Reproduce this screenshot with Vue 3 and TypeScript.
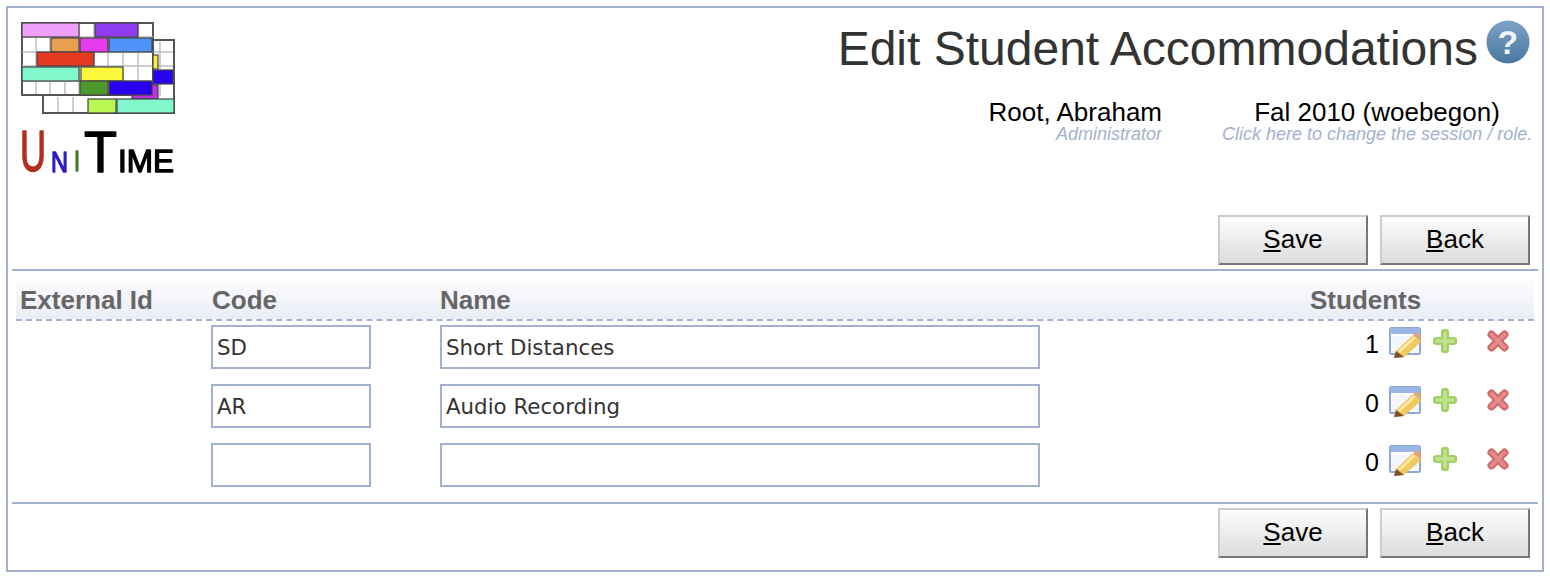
<script setup lang="ts">
interface Row { code: string; name: string; students: number }
const rows: Row[] = [
  { code: 'SD', name: 'Short Distances', students: 1 },
  { code: 'AR', name: 'Audio Recording', students: 0 },
  { code: '', name: '', students: 0 },
]
interface Bar { x: number; y: number; w: number; c: string }
const bars: Bar[] = [
  { x: 22, y: 23, w: 57, c: '#eea0f8' }, { x: 95, y: 23, w: 43, c: '#8f3cf0' },
  { x: 51, y: 38, w: 28, c: '#e8a050' }, { x: 80, y: 38, w: 28, c: '#e63cee' }, { x: 109, y: 38, w: 43, c: '#4f94f8' },
  { x: 37, y: 52, w: 57, c: '#e43a20' }, { x: 153, y: 55, w: 5, c: '#f8f040' },
  { x: 22, y: 67, w: 57, c: '#80f8cc' }, { x: 81, y: 67, w: 42, c: '#fcf83c' }, { x: 153, y: 70, w: 20, c: '#2a00f0' },
  { x: 132, y: 85, w: 26, c: '#c030e0' },
  { x: 80, y: 81, w: 28, c: '#4c982c' }, { x: 109, y: 81, w: 43, c: '#2a00f0' },
  { x: 88, y: 99, w: 28, c: '#b8f850' }, { x: 117, y: 99, w: 57, c: '#80f8cc' },
]
const vLines: number[] = [36, 50, 65, 79, 94, 108, 123, 138]
</script>

<template>
  <div class="frame">
    <header class="top">
      <svg class="logo" viewBox="18 18 162 172" width="162" height="172" role="img" aria-label="UniTime">
        <rect x="43" y="40" width="131" height="73" fill="#fff" stroke="#555" stroke-width="2" />
        <g stroke="#bbb" stroke-width="1.4">
          <line x1="58" y1="97" x2="58" y2="112" /><line x1="73" y1="97" x2="73" y2="112" />
          <line x1="160" y1="42" x2="160" y2="96" /><line x1="154" y1="66" x2="173" y2="66" />
          <line x1="154" y1="52" x2="173" y2="52" />
        </g>
        <rect x="22" y="23" width="131" height="72" fill="#fff" stroke="#555" stroke-width="2" />
        <g stroke="#bbb" stroke-width="1.4">
          <line v-for="x in vLines" :key="x" :x1="x" y1="24" :x2="x" y2="94" />
          <line x1="22" y1="37" x2="153" y2="37" /><line x1="22" y1="52" x2="153" y2="52" />
          <line x1="22" y1="66" x2="153" y2="66" /><line x1="22" y1="81" x2="153" y2="81" />
        </g>
        <rect v-for="b in bars" :key="b.x + '-' + b.y" :x="b.x" :y="b.y" :width="b.w" height="14" :fill="b.c" stroke="#444" stroke-width="1.2" />
        <text class="lt" x="20" y="171" font-size="58" fill="#b03020" stroke="#b03020" textLength="26" lengthAdjust="spacingAndGlyphs">U</text>
        <text class="lt" x="51" y="172" font-size="30" fill="#2a18c8" stroke="#2a18c8" textLength="17" lengthAdjust="spacingAndGlyphs">N</text>
        <text class="lt" x="74" y="171" font-size="30" fill="#3d7a30" stroke="#3d7a30" textLength="6" lengthAdjust="spacingAndGlyphs">I</text>
        <text class="lt" x="84" y="172" font-size="58" fill="#000" stroke="#000" textLength="33" lengthAdjust="spacingAndGlyphs">T</text>
        <text class="lt" x="118" y="172" font-size="32" fill="#000" stroke="#000" textLength="56" lengthAdjust="spacingAndGlyphs">IME</text>
      </svg>
      <div class="head-right">
        <div class="title-row">
          <h1>Edit Student Accommodations</h1>
          <svg class="help" viewBox="0 0 44 44" width="44" height="44" role="img" aria-label="Help">
            <defs>
              <linearGradient id="hg" x1="0" y1="0" x2="0" y2="1">
                <stop offset="0" stop-color="#7ea3c8" />
                <stop offset="1" stop-color="#4a769f" />
              </linearGradient>
            </defs>
            <circle cx="22" cy="22" r="21.5" fill="url(#hg)" />
            <text x="22" y="34" text-anchor="middle" class="q">?</text>
          </svg>
        </div>
        <div class="info">
          <div class="user">
            <div class="big">Root, Abraham</div>
            <div class="small clip">Administrator</div>
          </div>
          <div class="session">
            <div class="big">Fal 2010 (woebegon)</div>
            <div class="small">Click here to change the session / role.</div>
          </div>
        </div>
      </div>
    </header>

    <div class="buttons">
      <button type="button"><u>S</u>ave</button>
      <button type="button"><u>B</u>ack</button>
    </div>
    <div class="rule"></div>

    <div class="grid head">
      <div>External Id</div>
      <div>Code</div>
      <div>Name</div>
      <div>Students</div>
    </div>

    <div v-for="(r, i) in rows" :key="i" class="grid row">
      <div></div>
      <div class="cell-input"><input class="code" type="text" :value="r.code" /></div>
      <div class="cell-input"><input class="name" type="text" :value="r.name" /></div>
      <div class="actions">
        <span class="count">{{ r.students }}</span>
        <svg class="ic edit" viewBox="0 0 32 32" width="32" height="32">
          <rect x="1" y="1" width="30" height="26" rx="1.5" fill="#fdfdff" stroke="#8aa8dc" stroke-width="2" />
          <rect x="1" y="1" width="30" height="6" fill="#9bb6e4" />
          <path d="M3 9 H29 V25 H3 Z" fill="#f4f6fb" />
          <path d="M7 24 L24 8 L32 15 L15 30 L5 31 Z" fill="#f1c95e" />
          <path d="M10 25 L26 10" stroke="#fbeaa4" stroke-width="3" />
          <path d="M24 8 L27 6 Q30 6 32 9 L32 15 Z" fill="#e2a678" />
          <path d="M7 24 L15 30 L5 31 Z" fill="#7d5028" />
        </svg>
        <svg class="ic plus" viewBox="0 0 24 24" width="24" height="24">
          <path d="M12 3.5 V20.5 M3.5 12 H20.5" stroke="#a3cf68" stroke-width="8" stroke-linecap="round" />
          <path d="M12 4 V20 M4 12 H20" stroke="#bfe48c" stroke-width="3.5" stroke-linecap="round" />
        </svg>
        <svg class="ic del" viewBox="0 0 22 22" width="22" height="22">
          <path d="M4.5 4.5 L17.5 17.5 M17.5 4.5 L4.5 17.5" stroke="#d06c6c" stroke-width="8" stroke-linecap="round" />
          <path d="M4.5 4.5 L17.5 17.5 M17.5 4.5 L4.5 17.5" stroke="#e68a8a" stroke-width="3.5" stroke-linecap="round" />
        </svg>
      </div>
    </div>

    <div class="rule bottom"></div>
    <div class="buttons">
      <button type="button"><u>S</u>ave</button>
      <button type="button"><u>B</u>ack</button>
    </div>
  </div>
</template>

<style>
html, body { margin: 0; background: #fff; }
</style>

<style scoped>
.frame {
  box-sizing: border-box;
  width: 1538px;
  height: 566px;
  margin: 6px 0 0 6px;
  border: 2px solid #a4b0cf;
  padding: 0 4px;
  font-family: "Liberation Sans", Arial, sans-serif;
  color: #000;
}
.top {
  display: flex;
  height: 207px;
}
.logo {
  flex: none;
  margin: 10px 0 0 6px;
  filter: blur(0.6px);
}
.lt {
  font-family: "Liberation Sans", Arial, sans-serif;
  stroke-width: 1.4px;
  stroke-linejoin: round;
}
.head-right {
  flex: 1;
  min-width: 0;
  display: flex;
  flex-direction: column;
}
.title-row {
  display: flex;
  justify-content: flex-end;
  align-items: flex-start;
  gap: 8px;
  padding: 12px 8px 0 0;
}
h1 {
  margin: 3px 0 0;
  font-size: 48px;
  line-height: 52px;
  font-weight: 400;
  color: #333;
}
.help { flex: none; filter: blur(0.4px); }
.q { font: 700 34px "Liberation Sans", Arial, sans-serif; fill: #eef3f8; }
.info {
  display: flex;
  justify-content: flex-end;
  margin-top: 23px;
  margin-right: 6px;
  column-gap: 60px;
}
.user { width: 180px; text-align: right; }
.session { width: 310px; text-align: center; }
.big { font-size: 26px; line-height: 28px; }
.small {
  font-size: 18px;
  line-height: 17px;
  font-style: italic;
  color: #a4b0cf;
  white-space: nowrap;
}
.clip { overflow: hidden; }
.buttons {
  display: flex;
  justify-content: flex-end;
  gap: 12px;
  padding-right: 8px;
}
button {
  box-sizing: border-box;
  width: 150px;
  height: 50px;
  padding: 0 0 2px;
  font: 26px "Liberation Sans", Arial, sans-serif;
  color: #000;
  background: linear-gradient(#fdfdfd, #dcdcdc);
  border: 2px solid;
  border-color: #ccc #777 #777 #ccc;
  border-radius: 0;
}
.rule {
  height: 2px;
  margin-top: 4px;
  background: #a4b0cf;
}
.rule.bottom { margin-top: 4px; margin-bottom: 4px; }
.grid {
  display: grid;
  grid-template-columns: 191px 229px 870px 228px;
  margin: 0 4px;
}
.head {
  box-sizing: border-box;
  height: 46px;
  margin-top: 4px;
  align-items: end;
  padding-bottom: 5px;
  font-size: 26px;
  line-height: 28px;
  font-weight: 700;
  color: #666;
  background: linear-gradient(#fff, #e9ecf6);
  border-bottom: 2px dashed #a4b0cf;
}
.head > div { padding-left: 4px; }
.head > div:nth-child(2) { padding-left: 5px; }
.row > div:nth-child(2) { padding-left: 4px; }
.row { height: 59px; box-sizing: border-box; padding-top: 4px; }
.cell-input { display: flex; align-items: flex-start; }
.cell-input:nth-child(3) { padding-left: 4px; }
input {
  box-sizing: border-box;
  height: 44px;
  padding: 0 4px;
  border: 2px solid #a4b0cf;
  border-radius: 0;
  outline: none;
  font: 21.33px "DejaVu Sans", Verdana, sans-serif;
  color: #333;
  background: #fff;
}
.code { width: 160px; }
.name { width: 600px; }
.actions {
  position: relative;
  display: flex;
  align-items: flex-start;
  padding-left: 4px;
}
.count {
  width: 69px;
  text-align: right;
  font-size: 25px;
  line-height: 28px;
  margin-top: 5px;
}
.ic { flex: none; filter: blur(0.6px); }
.edit { margin: 2px 0 0 10px; }
.plus { margin: 4px 0 0 12px; }
.del { margin: 5px 0 0 30px; }
</style>
